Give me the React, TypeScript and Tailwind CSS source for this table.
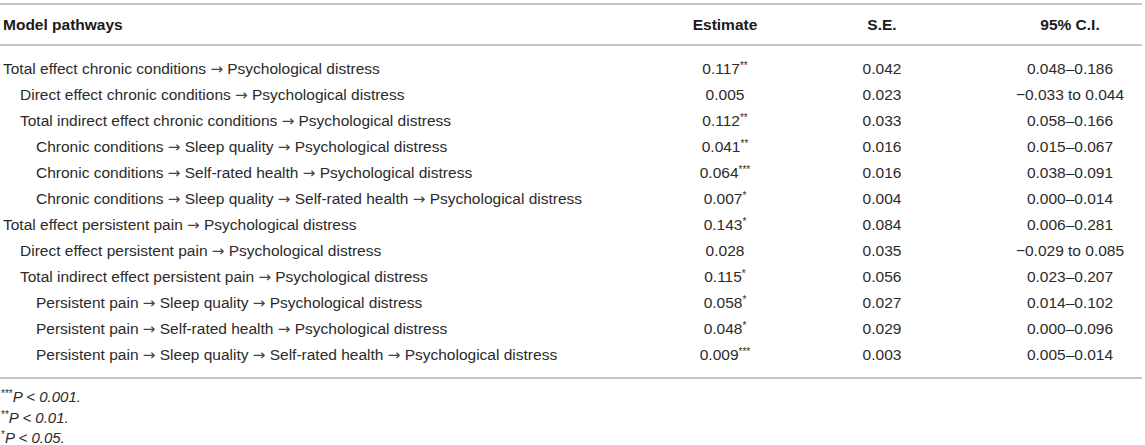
const rows: { label: string; level: number; est: string; sig: string; se: string; ci: string }[] = [
  { label: "Total effect chronic conditions → Psychological distress", level: 0, est: "0.117", sig: "**", se: "0.042", ci: "0.048–0.186" },
  { label: "Direct effect chronic conditions → Psychological distress", level: 1, est: "0.005", sig: "", se: "0.023", ci: "−0.033 to 0.044" },
  { label: "Total indirect effect chronic conditions → Psychological distress", level: 1, est: "0.112", sig: "**", se: "0.033", ci: "0.058–0.166" },
  { label: "Chronic conditions → Sleep quality → Psychological distress", level: 2, est: "0.041", sig: "**", se: "0.016", ci: "0.015–0.067" },
  { label: "Chronic conditions → Self-rated health → Psychological distress", level: 2, est: "0.064", sig: "***", se: "0.016", ci: "0.038–0.091" },
  { label: "Chronic conditions → Sleep quality → Self-rated health → Psychological distress", level: 2, est: "0.007", sig: "*", se: "0.004", ci: "0.000–0.014" },
  { label: "Total effect persistent pain → Psychological distress", level: 0, est: "0.143", sig: "*", se: "0.084", ci: "0.006–0.281" },
  { label: "Direct effect persistent pain → Psychological distress", level: 1, est: "0.028", sig: "", se: "0.035", ci: "−0.029 to 0.085" },
  { label: "Total indirect effect persistent pain → Psychological distress", level: 1, est: "0.115", sig: "*", se: "0.056", ci: "0.023–0.207" },
  { label: "Persistent pain → Sleep quality → Psychological distress", level: 2, est: "0.058", sig: "*", se: "0.027", ci: "0.014–0.102" },
  { label: "Persistent pain → Self-rated health → Psychological distress", level: 2, est: "0.048", sig: "*", se: "0.029", ci: "0.000–0.096" },
  { label: "Persistent pain → Sleep quality → Self-rated health → Psychological distress", level: 2, est: "0.009", sig: "***", se: "0.003", ci: "0.005–0.014" },
]

const indent = ["pl-[3px]", "pl-[20px]", "pl-[36px]"]

// the arrows are set in DejaVu so they look like the wide thin ones in the print
function Pathway({ text }: { text: string }) {
  const parts = text.split(" → ")
  return (
    <>
      {parts.map((p, i) => (
        <span key={i}>
          {i > 0 && (
            <>
              {" "}
              <span className="font-['DejaVu_Sans',sans-serif] text-[15px] text-[#444]">→</span>{" "}
            </>
          )}
          {p}
        </span>
      ))}
    </>
  )
}

export default function App() {
  return (
    <div className="w-[1145px] h-[445px] bg-white pt-[3px] text-[#2b2b2b] font-['Liberation_Sans',Arial,sans-serif] text-[15.5px]">
      <div className="mr-[3px] border-t-2 border-b-2 border-[#c4c4c4]">
        <div className="grid grid-cols-[620px_210px_104px_1fr] h-[39px] items-center font-bold text-[15.5px] text-[#1a1a1a]">
          <div className="pl-[3px]">Model pathways</div>
          <div className="text-center">Estimate</div>
          <div className="text-center">S.E.</div>
          <div className="text-center pl-[64px]">95% C.I.</div>
        </div>
      </div>
      <div className="mr-[3px] border-b-2 border-[#c4c4c4] pt-[10px] pb-[9px]">
        {rows.map((r) => (
          <div key={r.label} className="grid grid-cols-[620px_210px_104px_1fr] h-[26px] items-center">
            <div className={indent[r.level]}>
              <Pathway text={r.label} />
            </div>
            <div className="text-center">
              {r.est}
              {r.sig && <sup className="text-[10px]">{r.sig}</sup>}
            </div>
            <div className="text-center">{r.se}</div>
            <div className="text-center pl-[64px]">{r.ci}</div>
          </div>
        ))}
      </div>
      <div className="pt-[8px] pl-[1px] text-[15px] italic leading-[20.5px]">
        <div>
          <sup className="not-italic text-[10px]">***</sup>P &lt; 0.001.
        </div>
        <div>
          <sup className="not-italic text-[10px]">**</sup>P &lt; 0.01.
        </div>
        <div>
          <sup className="not-italic text-[10px]">*</sup>P &lt; 0.05.
        </div>
      </div>
    </div>
  )
}
